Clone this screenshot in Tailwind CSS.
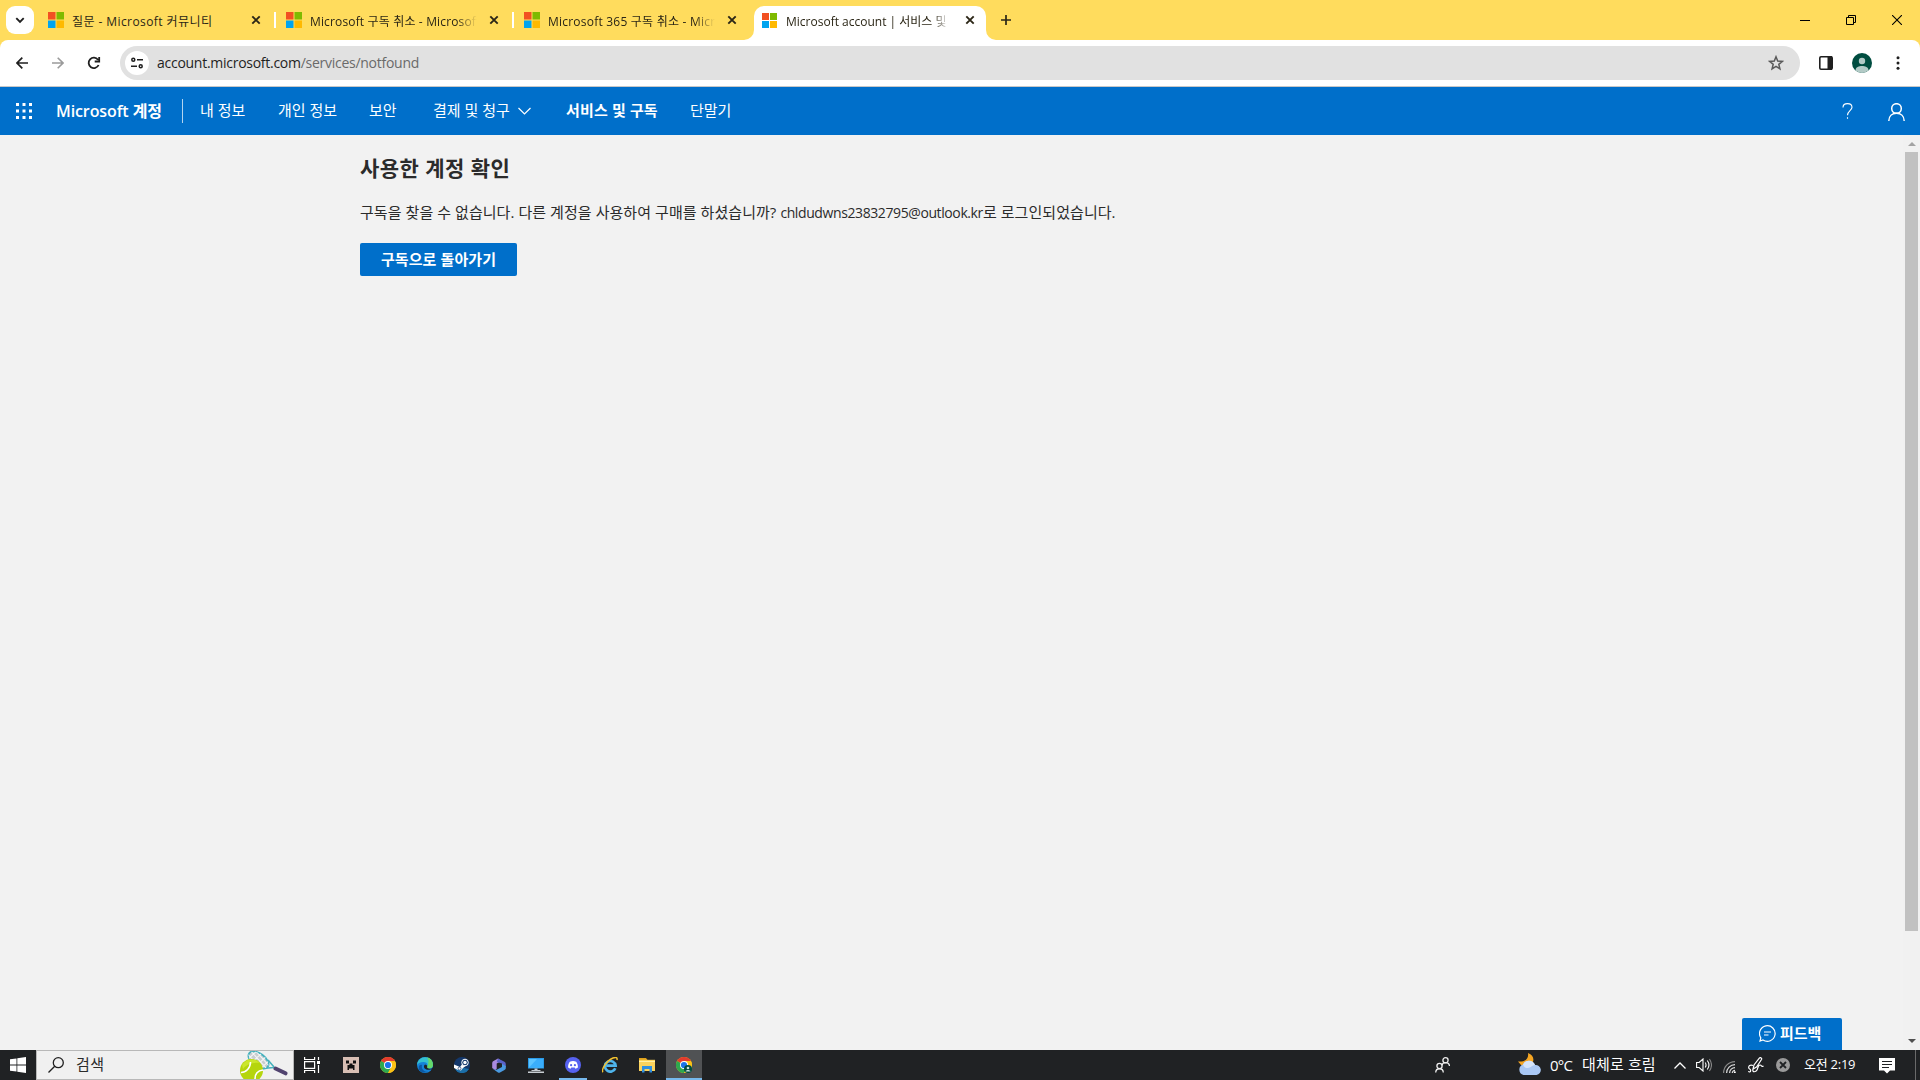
<!DOCTYPE html>
<html lang="ko">
<head>
  <meta charset="UTF-8" />
  <meta name="viewport" content="width=device-width, initial-scale=1.0" />
  <title>Microsoft account | 서비스 및 구독</title>
  <script src="https://cdn.jsdelivr.net/npm/@tailwindcss/browser@4"></script>
</head>
<body class="w-[1920px] h-[1080px] overflow-hidden flex flex-col bg-[#f2f2f2] font-['Open_Sans','Noto_Sans_CJK_KR',sans-serif] whitespace-nowrap">

  <svg class="hidden">
    <symbol id="ms" viewBox="0 0 16 16">
      <path fill="#f25022" d="M0 0h7.5v7.5H0z"/><path fill="#7fba00" d="M8.5 0H16v7.5H8.5z"/>
      <path fill="#00a4ef" d="M0 8.5h7.5V16H0z"/><path fill="#ffb900" d="M8.5 8.5H16V16H8.5z"/>
    </symbol>
    <symbol id="close" viewBox="0 0 10 10"><path d="M1.3 1.3l7.4 7.4M8.7 1.3L1.3 8.7" stroke="#2b2616" stroke-width="1.9"/></symbol>
    <symbol id="chrome" viewBox="0 0 16 16">
      <circle cx="8" cy="8" r="8" fill="#fbc116"/>
      <path d="M8 8L1.07 4A8 8 0 0 1 14.93 4z" fill="#e33b2e"/>
      <path d="M8 8L1.07 4A8 8 0 0 0 8 16l3.5-6z" fill="#2da94f"/>
      <path d="M14.93 4H8v4l3.5 2L8 16A8 8 0 0 0 14.93 4z" fill="#fbc116"/>
      <circle cx="8" cy="8" r="4" fill="#fff"/><circle cx="8" cy="8" r="3.1" fill="#1a73e8"/>
    </symbol>
  </svg>

  <!-- Tab strip -->
  <div class="h-10 bg-[#ffdc5d] flex text-xs text-[#2b2616] shrink-0">
    <div class="w-9 pl-1.5 pt-1.5">
      <div class="w-7 h-7 rounded-[9px] bg-white flex items-center justify-center">
        <svg class="w-2.5 h-2.5" viewBox="0 0 10 10" fill="none" stroke="#1f1f1f" stroke-width="1.9"><path d="M1.3 3.2L5 6.9l3.7-3.7"/></svg>
      </div>
    </div>
    <div class="w-[238px] flex items-center pl-3">
      <svg class="w-4 h-4"><use href="#ms"/></svg>
      <span class="ml-2 w-[169px] overflow-hidden pt-1 tracking-[0.42px]">질문 - Microsoft 커뮤니티</span>
      <svg class="w-2.5 h-2.5 ml-[10px]"><use href="#close"/></svg>
      <i class="w-0.5 h-4 bg-white ml-auto -mr-0.5"></i>
    </div>
    <div class="w-[238px] flex items-center pl-3">
      <svg class="w-4 h-4"><use href="#ms"/></svg>
      <span class="ml-2 mr-0.5 w-[167px] overflow-hidden pt-1 tracking-[0.15px] mask-r-from-88%">Microsoft 구독 취소 - Microsoft</span>
      <svg class="w-2.5 h-2.5 ml-[10px]"><use href="#close"/></svg>
      <i class="w-0.5 h-4 bg-white ml-auto -mr-0.5"></i>
    </div>
    <div class="w-[242px] flex items-center pl-3">
      <svg class="w-4 h-4"><use href="#ms"/></svg>
      <span class="ml-2 mr-0.5 w-[167px] overflow-hidden pt-1 tracking-[0.22px] mask-r-from-88%">Microsoft 365 구독 취소 - Micro</span>
      <svg class="w-2.5 h-2.5 ml-[10px]"><use href="#close"/></svg>
    </div>
    <div class="w-[232px] mt-1.5 bg-white rounded-t-[10px] flex items-center pl-2 pb-1.5 relative">
      <svg class="absolute bottom-0 -left-2.5 w-2.5 h-2.5" viewBox="0 0 10 10"><path fill="#fff" d="M10 0v10H0A10 10 0 0 0 10 0z"/></svg>
      <svg class="absolute bottom-0 -right-2.5 w-2.5 h-2.5" viewBox="0 0 10 10"><path fill="#fff" d="M0 0v10h10A10 10 0 0 1 0 0z"/></svg>
      <svg class="w-[15px] h-[15px]"><use href="#ms"/></svg>
      <span class="ml-[9px] mr-1.5 w-[163px] overflow-hidden pt-[3px] mask-r-from-90%">Microsoft account | 서비스 및</span>
      <svg class="w-2.5 h-2.5 ml-2.5"><use href="#close"/></svg>
    </div>
    <svg class="w-2.5 h-2.5 ml-[15px] mt-[15px]" viewBox="0 0 10 10" stroke="#2b2616" stroke-width="1.7"><path d="M5 0v10M0 5h10"/></svg>
    <div class="ml-auto flex items-center pr-[18px] gap-9">
      <svg class="w-2.5 h-2.5" viewBox="0 0 10 10" stroke="#000"><path d="M0 5.5h10"/></svg>
      <svg class="w-2.5 h-2.5" viewBox="0 0 10 10" fill="none" stroke="#000"><path d="M.5 2.5h7v7h-7zM2.5 2.5v-2h7v7h-2"/></svg>
      <svg class="w-2.5 h-2.5" viewBox="0 0 10 10" stroke="#000" stroke-width="1.1"><path d="M0 0l10 10M10 0L0 10"/></svg>
    </div>
  </div>

  <!-- Toolbar -->
  <div class="bg-[#ffdc5d] shrink-0">
    <div class="h-[47px] bg-white rounded-t-[8px] border-b border-[#c8c8c8] flex items-center">
      <svg class="w-3 h-3 ml-4" viewBox="0 0 12 12" fill="none" stroke="#1f1f1f" stroke-width="1.7"><path d="M12 6H1M6.3.7L1 6l5.3 5.3"/></svg>
      <svg class="w-3 h-3 ml-6" viewBox="0 0 12 12" fill="none" stroke="#9b9b9b" stroke-width="1.6"><path d="M0 6h11M5.7.7L11 6l-5.3 5.3"/></svg>
      <svg class="w-[14px] h-[14px] ml-[23px]" viewBox="0 0 14 14" fill="none" stroke="#1f1f1f" stroke-width="1.8"><path d="M11.6 9A5.2 5.2 0 1 1 11 3.7M12.2 1v4.5H7.7"/></svg>
      <div class="ml-[19px] w-[1680px] h-[34px] rounded-full bg-[#e1e1e1] flex items-center pl-[5px]">
        <div class="w-6 h-6 rounded-full bg-white flex items-center justify-center">
          <svg class="w-3 h-3" viewBox="0 0 12 12" fill="none" stroke="#1f1f1f" stroke-width="1.5"><circle cx="2.3" cy="2.8" r="1.5"/><path d="M6 2.8h6M0 9.2h6"/><circle cx="9.7" cy="9.2" r="1.5"/></svg>
        </div>
        <span class="ml-2 text-sm text-[#1f1f1f] tracking-[-0.27px]">account.microsoft.com<span class="text-[#6a6a6a]">/services/notfound</span></span>
        <svg class="w-4 h-4 ml-auto mr-4" viewBox="0 0 16 16" fill="none" stroke="#5a5a5a" stroke-width="1.5"><path d="M8 1.8l1.7 4.3 4.6.3-3.5 2.9 1.1 4.5L8 11.3l-3.9 2.5 1.1-4.5L1.7 6.4l4.6-.3z"/></svg>
      </div>
      <svg class="w-[14px] h-[14px] ml-[19px]" viewBox="0 0 14 14"><rect x=".8" y=".8" width="12.4" height="12.4" rx="1.2" fill="none" stroke="#1f1f1f" stroke-width="1.6"/><path fill="#1f1f1f" d="M8.5 0H13v14H8.5z"/></svg>
      <svg class="w-5 h-5 ml-[19px]" viewBox="0 0 20 20"><circle cx="10" cy="10" r="10" fill="#004d40"/><circle cx="10" cy="8" r="3.2" fill="#b2cac6"/><path d="M3.5 17.5C3.500 14 7 13 10 13s6.500 1 6.500 4.500A10 10 0 0 1 3.500 17.500z" fill="#b2cac6"/></svg>
      <svg class="w-1 h-[14px] ml-6" viewBox="0 0 4 14" fill="#1f1f1f"><circle cx="2" cy="1.7" r="1.5"/><circle cx="2" cy="7" r="1.5"/><circle cx="2" cy="12.3" r="1.5"/></svg>
    </div>
  </div>

  <!-- Account nav -->
  <nav class="h-12 bg-[#006fca] text-white text-[15px] flex items-center shrink-0">
    <svg class="w-4 h-4 ml-4" viewBox="0 0 16 16" fill="#fff"><path d="M0 0h3v3H0zM6.500 0h3v3h-3zM13 0h3v3h-3zM0 6.500h3v3H0zM6.500 6.500h3v3h-3zM13 6.500h3v3h-3zM0 13h3v3H0zM6.500 13h3v3h-3zM13 13h3v3h-3z"/></svg>
    <b class="w-[126px] ml-6 text-base font-semibold tracking-[-0.1px]">Microsoft 계정</b>
    <i class="w-px h-6 bg-white/70"></i>
    <span class="ml-[17px] w-[78px] pb-0.5">내 정보</span>
    <span class="w-[91px] pb-0.5">개인 정보</span>
    <span class="w-16 pb-0.5">보안</span>
    <span class="w-[85px] pb-0.5">결제 및 청구</span>
    <svg class="w-[13px] h-2" viewBox="0 0 13 8" fill="none" stroke="#fff" stroke-width="1.2"><path d="M.5 1l6 6 6-6"/></svg>
    <b class="ml-[35px] w-[124px] pb-0.5 font-semibold tracking-[0.15px]">서비스 및 구독</b>
    <span class="pb-0.5">단말기</span>
    <svg class="w-[11px] h-4 ml-auto" viewBox="0 0 11 16" fill="none" stroke="#fff" stroke-width="1.1"><path d="M1 4.500C1 2 3 .6 5.500.6S10 2 10 4.300c0 3.200-4.500 3.700-4.500 8M5.500 14.300v1.500"/></svg>
    <svg class="w-[17px] h-[18px] ml-[35px] mr-[15px] mt-px" viewBox="0 0 17 18" fill="none" stroke="#fff" stroke-width="1.5"><circle cx="8.500" cy="5.500" r="4.800"/><path d="M.8 18c0-5 3.500-7.700 7.700-7.700s7.700 2.700 7.700 7.700"/></svg>
  </nav>

  <!-- Page -->
  <div class="grow flex relative min-h-0">
    <main class="grow pl-[360px] text-[#2b2b2b] text-[15px]">
      <h1 class="mt-[18px] h-[30px] leading-[30px] text-[21px] font-semibold tracking-[0.45px]">사용한 계정 확인</h1>
      <p class="mt-[19px] h-5 leading-5 tracking-[0.06px]">구독을 찾을 수 없습니다. 다른 계정을 사용하여 구매를 하셨습니까? <span class="text-sm leading-5 tracking-[-0.4px]">chldudwns23832795@outlook.kr</span>로 로그인되었습니다.</p>
      <button class="mt-[21px] w-[157px] h-[33px] bg-[#006fca] text-white font-semibold rounded-xs tracking-[0.1px]">구독으로 돌아가기</button>
    </main>
    <div class="w-[17px] bg-[#f1f1f1] flex flex-col items-center">
      <svg class="w-2 h-1 mt-[7px]" viewBox="0 0 8 4"><path fill="#a3a3a3" d="M4 0l4 4H0z"/></svg>
      <div class="w-[13px] h-[779px] mt-1.5 bg-[#c1c1c1]"></div>
      <svg class="w-2 h-1 mt-auto mb-[7px]" viewBox="0 0 8 4"><path fill="#505050" d="M0 0h8L4 4z"/></svg>
    </div>
    <button class="absolute right-[78px] bottom-0 w-[100px] h-8 bg-[#006fca] text-white text-[15px] font-semibold rounded-t-xs flex items-center pl-[17px] pb-px gap-1">
      <svg class="w-[17px] h-[17px]" viewBox="0 0 17 17" fill="none" stroke="#fff" stroke-width="1.2"><path d="M1.800 12.800A7.800 7.800 0 1 1 4 15l-3 1zM5 7h7M5 10h4.500"/></svg>
      피드백
    </button>
  </div>

  <!-- Taskbar -->
  <div class="h-[30px] bg-[#202224] text-white flex items-center shrink-0">
    <svg class="w-4 h-4 ml-2.5" viewBox="0 0 16 16" fill="#fff"><path d="M0 2.300L6.500 1.400v6.200H0zM7.300 1.300L16 0v7.600H7.300zM0 8.400h6.500v6.200L0 13.700zM7.300 8.400H16V16l-8.700-1.300z"/></svg>
    <div class="ml-2.5 w-[258px] h-[30px] bg-[#f0f0f0] border border-[#b8b8b8] flex items-center text-[15px] text-[#2b2b2b] pl-[11px]">
      <svg class="w-4 h-4" viewBox="0 0 16 16" fill="none" stroke="#1f1f1f" stroke-width="1.3"><circle cx="10.300" cy="5.700" r="5"/><path d="M6.700 9.300L.5 15.500"/></svg>
      <span class="ml-3 pb-0.5 tracking-[0.5px]">검색</span>
      <svg class="w-12 h-7 ml-auto mr-[5px]" viewBox="0 0 48 28">
        <defs><clipPath id="head"><ellipse cx="18.500" cy="9" rx="11.500" ry="6.500" transform="rotate(36 18.500 9)"/></clipPath></defs>
        <path d="M22 17.500l12-1M28 9l6 7" fill="none" stroke="#45b1bd" stroke-width="1.6"/>
        <ellipse cx="18.500" cy="9" rx="11.500" ry="6.500" transform="rotate(36 18.500 9)" fill="#c9cdd0" stroke="#45b1bd" stroke-width="1.8"/>
        <path clip-path="url(#head)" d="M5 0l18 20M9-2l18 20M13-3l18 20M1 2l18 20M6 10L20-3M10 13L24 0M14 17L29 3M18 20L33 6" stroke="#f4f5f5" stroke-width="1.1"/>
        <path d="M35.500 17.500l10 4.800" stroke="#51436f" stroke-width="4" stroke-linecap="round"/>
        <circle cx="11.500" cy="19.500" r="11.500" fill="#b5d50d"/>
        <path d="M2 14a11.500 11.500 0 0 1 18-2c-4-1-13 0-17 6z" fill="#cbe62c"/>
        <path d="M1 21.500c5 0 9.500-4.500 9.500-10.500M15 28c0-5 3-8.500 8-9" fill="none" stroke="#fff" stroke-width="1.6"/>
      </svg>
    </div>
    <div class="w-[35px] flex justify-center">
      <svg class="w-4 h-4" viewBox="0 0 16 16" fill="none" stroke="#fff" stroke-width="1.2"><path d="M.6 0v2.500h10V0M.6 16v-2.500h10V16M.6 4.600h10v6.800H.6zM14.500 0v3M14.500 8v8"/><path d="M13 4h3v3h-3z" fill="#fff" stroke="none"/></svg>
    </div>
    <div class="w-10 flex justify-center pl-[3px]">
      <svg class="w-4 h-4" viewBox="0 0 16 16"><path fill="#d8bfb4" d="M0 0h16v16H0z"/><path fill="#111" d="M3 3.500h3v3H3zM10 3.500h3v3h-3zM6.500 6.500h3V8H11.500v5H10v-1.500H6V13H4.500V8h2z"/></svg>
    </div>
    <div class="w-[37px] flex justify-center"><svg class="w-4 h-4"><use href="#chrome"/></svg></div>
    <div class="w-[37px] flex justify-center">
      <svg class="w-4 h-4" viewBox="0 0 16 16"><circle cx="8" cy="8" r="8" fill="#1583d8"/><path d="M.3 6A8 8 0 0 1 16 8c0 2.500-2 3.500-4 3.500-1.500 0-2.500-.7-2-1.500 1.500-3-.5-5-3.500-5C3.500 5 1 6 .3 8z" fill="#35c1d0"/><path d="M10 .3A8 8 0 0 1 16 8c0 2.500-2 3.500-4 3.500-1.500 0-2.500-.7-2-1.500C12 6 12 3 10 .3z" fill="#66d96a"/><path d="M5 8c-1 4 2 7 6 6.800A8 8 0 0 1 2 13C1 9 3 7 5 8z" fill="#0c59a4"/><path d="M8 7.500c-2 1.500-1 4.500 2 5.200 2 .4 4-.2 5-1l-1 2.500h2V11c-1 .7-6 1.500-6-1 .7-1 .2-2.200-2-2.500z" fill="#202224"/></svg>
    </div>
    <div class="w-[37px] flex justify-center">
      <svg class="w-4 h-4" viewBox="0 0 16 16"><circle cx="8" cy="8" r="8" fill="#14386b"/><path d="M1 12a8 8 0 0 0 14 0l-5-1z" fill="#1b6fa8"/><path d="M0 7.500l6 2.500 3-4 4 2-4 3-2 2.500-3-.5L0 11z" fill="#fff"/><circle cx="11" cy="5.500" r="3.300" fill="#14386b" stroke="#fff" stroke-width="1"/><circle cx="11" cy="5.500" r="1.700" fill="#fff"/><circle cx="5.500" cy="11.500" r="1.500" fill="#fff" stroke="#14386b" stroke-width=".7"/></svg>
    </div>
    <div class="w-[37px] flex justify-center">
      <svg class="w-[14px] h-[15px]" viewBox="0 0 14 15"><path d="M6 .5L1.500 3A2.500 2.500 0 0 0 .2 5v5l3 2 1.500-1V5.500L9.500 3z" fill="#a98be0"/><path d="M6 .5l6 3A2.500 2.500 0 0 1 13.800 6v3L10 10.500v-5L4.700 4z" fill="#5b62c9"/><path d="M13.800 8v2c0 1-.5 1.500-1.300 2L8 14.500a2 2 0 0 1-2 0L.3 10.500 4 12l6-3V6z" fill="#4a9ae0"/></svg>
    </div>
    <div class="w-[37px] flex justify-center">
      <svg class="w-4 h-4" viewBox="0 0 16 16"><path fill="#2b9be8" d="M0 1h16v10.500H0z"/><path fill="#5cc4ff" d="M1 2h14v8.500H1z"/><path fill="#3aaefb" d="M1 10.500L9 2h6v8.500z"/><path fill="#c8ced3" d="M6.500 11.500h3V13h3v1h-9v-1h3zM0 14.500h16V16H0z"/></svg>
    </div>
    <div class="w-[37px] h-full flex flex-col items-center justify-between pt-[7px]">
      <svg class="w-4 h-4" viewBox="0 0 16 16"><circle cx="8" cy="8" r="8" fill="#5662f0"/><path d="M4.800 4.700c2-1 4.400-1 6.400 0 1.200 1.700 1.900 3.700 1.700 5.800-.8.600-1.600 1-2.500 1.200l-.7-1.100H6.300l-.7 1.100c-.9-.2-1.700-.6-2.500-1.200-.2-2.100.5-4.100 1.700-5.800z" fill="#fff"/><circle cx="6.100" cy="8.200" r="1.100" fill="#5662f0"/><circle cx="9.900" cy="8.200" r="1.100" fill="#5662f0"/></svg>
      <div class="w-7 h-0.5 bg-[#76b9ed]"></div>
    </div>
    <div class="w-[37px] flex justify-center">
      <svg class="w-4 h-4" viewBox="0 0 16 16" fill="none"><path d="M13.300 11.200A5.300 5.300 0 1 1 13.600 8.700H4.500" stroke="#4fb5ec" stroke-width="2.700"/><path d="M1 15.300C-1 13 4 4 11 1c3-1.200 4.500-.5 4 2" stroke="#f2c230" stroke-width="1.5"/></svg>
    </div>
    <div class="w-[37px] flex justify-center">
      <svg class="w-4 h-4" viewBox="0 0 16 16"><path fill="#e0a21b" d="M0 1h7l1.500 2H0z"/><path fill="#fbd35d" d="M0 2.800h16V14H0z"/><path fill="#fff0a8" d="M0 4h16v1H0z"/><path fill="#2f8fe0" d="M3 9h10v6.500h-2.500V12h-5v3.500H3z"/></svg>
    </div>
    <div class="w-9 h-full bg-[#505254] flex flex-col items-center justify-between pt-[7px] ml-px">
      <svg class="w-4 h-4" viewBox="0 0 16 16"><use href="#chrome"/><circle cx="12" cy="12" r="4" fill="#004d40"/><circle cx="12" cy="11" r="1.300" fill="#c9dcd9"/><path d="M9.500 14.500c.3-2 4.700-2 5 0z" fill="#c9dcd9"/></svg>
      <div class="w-9 h-0.5 bg-[#76b9ed]"></div>
    </div>

    <svg class="w-[15px] h-4 ml-auto" viewBox="0 0 15 16" fill="none" stroke="#eee" stroke-width="1.3"><circle cx="10.500" cy="3.300" r="2.600"/><path d="M7 8.500c.3-4 7.200-4 7.500.5"/><circle cx="4.500" cy="9" r="2.600"/><path d="M.7 15.500c.2-5 7.400-5 7.600 0"/></svg>
    <svg class="w-6 h-6 ml-[68px] mb-0.5" viewBox="0 0 24 24"><path d="M10 1c6 2 7 8 3 12H3L0 9.500C7 10 11 7 10 1z" fill="#f5a623"/><path d="M5.500 23a5.500 5.500 0 0 1-.5-10.500A6.500 6.500 0 0 1 17 13a5 5 0 0 1 1.500 10z" fill="#a9c8f5"/><path d="M5 12.500A6.500 6.500 0 0 1 17 13c-3 0-4 3-7 3s-4-1-5-3.500z" fill="#d5e5fc"/></svg>
    <span class="ml-2 w-8 text-[15px] tracking-[-0.8px]">0°C</span>
    <span class="w-[92px] text-[15px] pb-0.5 tracking-[0.15px]">대체로 흐림</span>
    <svg class="w-3 h-[7px]" viewBox="0 0 12 7" fill="none" stroke="#fff" stroke-width="1.3"><path d="M.5 6.500L6 1l5.500 5.500"/></svg>
    <svg class="w-4 h-[14px] ml-2.5" viewBox="0 0 16 14" fill="none" stroke="#fff" stroke-width="1.1"><path d="M.6 4.500h2.500L7 1v12L3.100 9.500H.6zM9.200 4.500c1 1.500 1 3.500 0 5M11.300 2.500c2 2.700 2 6.300 0 9"/><path d="M13.400 1c2.600 3.700 2.600 8.300 0 12" stroke="#888"/></svg>
    <svg class="w-[13px] h-3 ml-[11px] mt-1" viewBox="0 0 13 12" fill="none" stroke-width="1.2"><path d="M.6 12A11.400 11.400 0 0 1 12 .6" stroke="#888"/><path d="M3.600 12A8.400 8.400 0 0 1 12 3.600M6.600 12A5.400 5.400 0 0 1 12 6.600M9.300 12A2.700 2.700 0 0 1 12 9.300" stroke="#ddd"/><circle cx="11.800" cy="11.200" r="1" fill="#fff"/></svg>
    <svg class="w-4 h-4 ml-3" viewBox="0 0 16 16" fill="none" stroke="#fff" stroke-width="1.2"><path d="M5 12L6 8l5.500-7c1-1 2.800.2 2 1.500L8.500 10zM5 8.500c-3-1-4.500.5-4.300 2.300.2 1.300 2 1.300 2 2.600 0 2-2 2-2 .7M5 12c-1 4 3 3 4 1s1-5 3-5 1 2.500 3.500 1"/></svg>
    <svg class="w-[14px] h-[14px] ml-3" viewBox="0 0 14 14"><circle cx="7" cy="7" r="7" fill="#9a9a9a"/><path d="M4 4l6 6M10 4l-6 6" stroke="#202224" stroke-width="1.8"/></svg>
    <span class="ml-3.5 w-[75px] text-[13px] pb-px tracking-[-0.25px]">오전 2:19</span>
    <svg class="w-4 h-4 mt-0.5" viewBox="0 0 16 16"><path fill="#fff" d="M0 0h16v12.500h-5L8 15.500l-3-3H0z"/><path stroke="#202224" stroke-width="1.1" d="M3 3.500h10M3 6.500h10M3 9.500h7"/></svg>
    <i class="w-px h-full bg-[#6a6a6a] ml-5 mr-1"></i>
  </div>
</body>
</html>
